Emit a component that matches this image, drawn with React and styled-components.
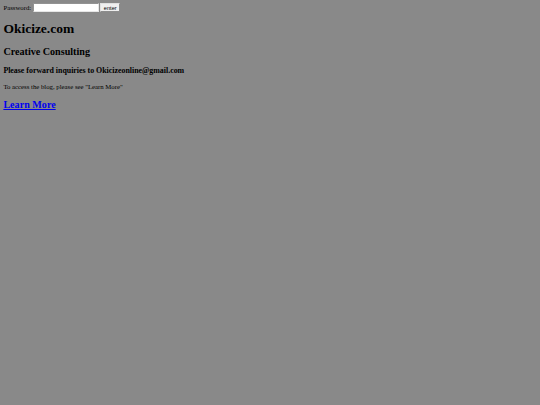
import React from "react";
import styled, { createGlobalStyle } from "styled-components";

const Global = createGlobalStyle`
  html, body { margin: 0; padding: 0; background: #898989; }
  body { font-family: "Liberation Serif", "Times New Roman", serif; color: #000; }
`;

const Page = styled.div`
  zoom: 0.421875;
  padding: 8px;
  font-family: "Liberation Serif", "Times New Roman", serif;
  font-size: 16px;
`;

const LoginForm = styled.form`
  display: flex;
  align-items: center;
  gap: 4px;
  margin: 0;
  height: 21px;
`;

const Label = styled.label`
  font-size: 16px;
`;

const Field = styled.input`
  box-sizing: border-box;
  width: 156px;
  height: 21px;
  padding: 1px 2px;
  border: 2px inset #e6e6e6;
  background: #fff;
  font-size: 13px;
`;

const Submit = styled.button`
  box-sizing: border-box;
  height: 21px;
  padding: 1px 6px;
  font-family: "Liberation Sans", Arial, sans-serif;
  font-size: 13.33px;
  background: #efefef;
  border: 2px outset #e0e0e0;
  color: #000;
`;

const Title = styled.h1`
  font-size: 32px;
  font-weight: bold;
  margin: 21.44px 0;
`;

const Subtitle = styled.h2`
  font-size: 24px;
  font-weight: bold;
  margin: ${(p) => (p.$spaced ? "22px" : "19.92px")} 0 19.92px;
`;

const Note = styled.h3`
  font-size: 18.72px;
  font-weight: bold;
  margin: 18.72px 0;
`;

const Text = styled.p`
  font-size: 16px;
  margin: 16px 0;
`;

const MoreLink = styled.a`
  color: #0000ee;
  text-decoration: underline;
`;

export default function App() {
  return (
    <>
      <Global />
      <Page>
        <LoginForm onSubmit={(e) => e.preventDefault()}>
          <Label htmlFor="pw">Password:</Label>
          <Field id="pw" type="password" />
          <Submit type="submit">enter</Submit>
        </LoginForm>
        <Title>Okicize.com</Title>
        <Subtitle>Creative Consulting</Subtitle>
        <Note>Please forward inquiries to Okicizeonline@gmail.com</Note>
        <Text>To access the blog, please see "Learn More"</Text>
        <Subtitle $spaced>
          <MoreLink href="#">Learn More</MoreLink>
        </Subtitle>
      </Page>
    </>
  );
}
